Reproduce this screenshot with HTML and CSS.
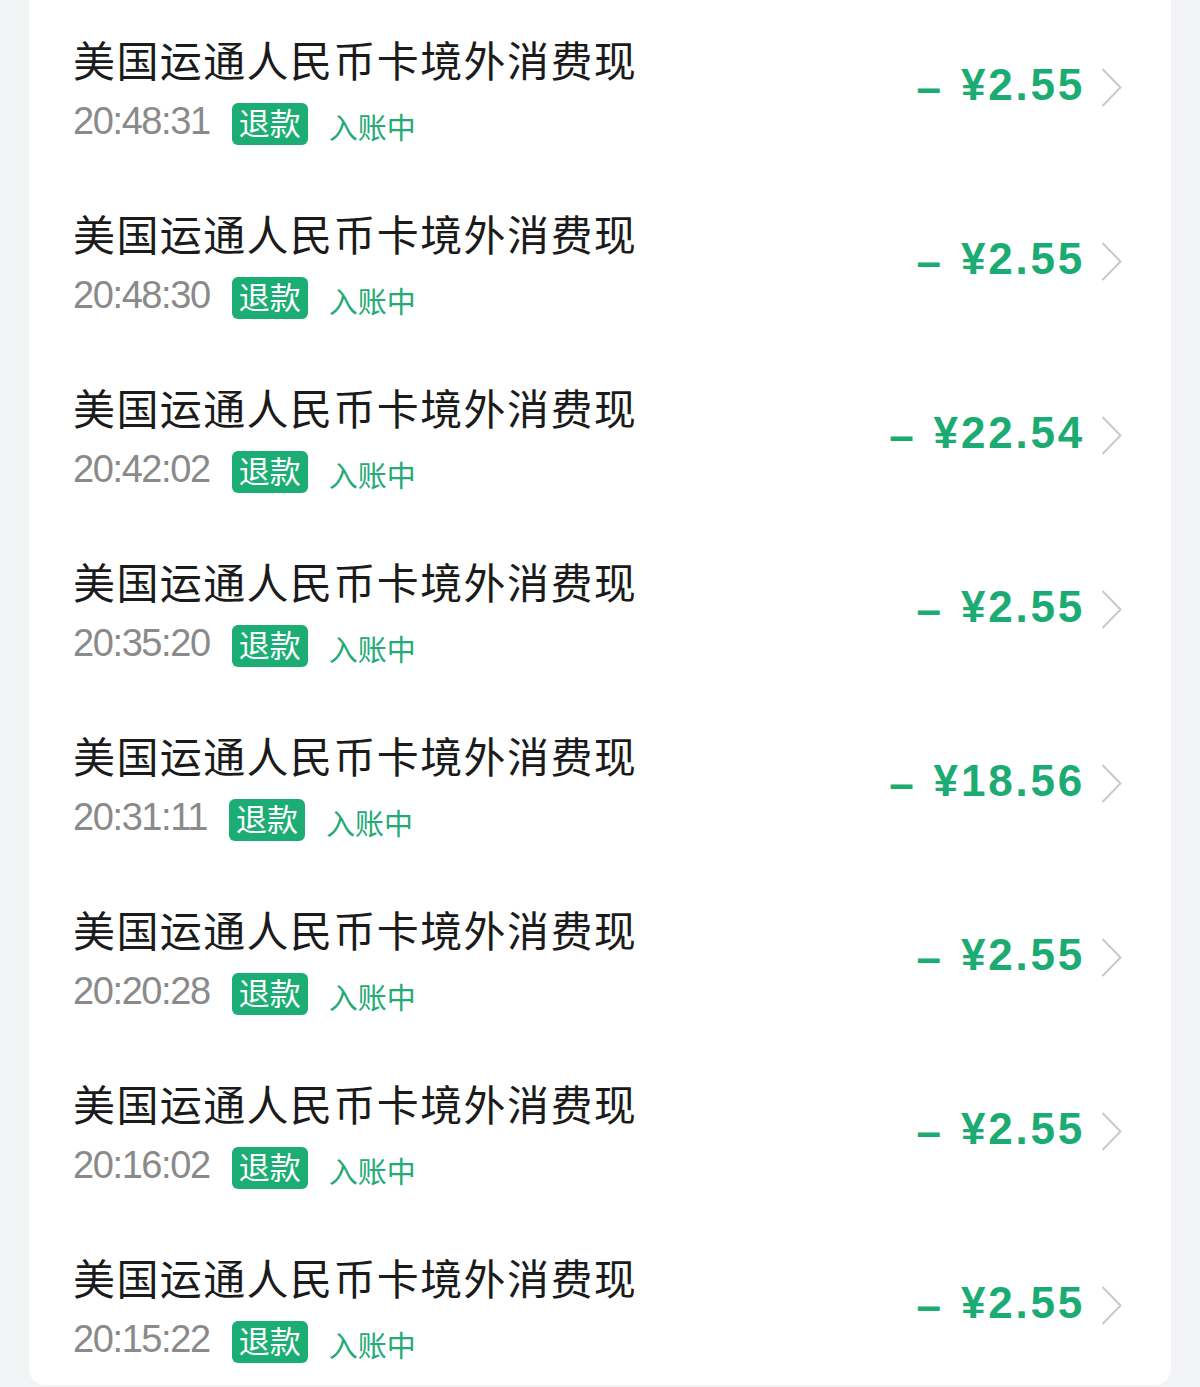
FILE: index.html
```html
<!DOCTYPE html>
<html lang="zh-CN">
<head>
<meta charset="utf-8">
<title>交易记录</title>
<link rel="stylesheet" href="styles.css">
</head>
<body>
<div class="page">
  <ul class="card">
    <li class="row">
      <div class="info">
        <div class="title">美国运通人民币卡境外消费现</div>
        <div class="meta"><span class="time">20:48:31</span><span class="badge">退款</span><span class="status">入账中</span></div>
      </div>
      <div class="side"><span class="amount"><span class="dash">–</span> ¥2.55</span><svg class="chev" viewBox="0 0 21 39" width="21" height="39"><polyline points="1.5,1 19.5,19.5 1.5,38" /></svg></div>
    </li>
    <li class="row">
      <div class="info">
        <div class="title">美国运通人民币卡境外消费现</div>
        <div class="meta"><span class="time">20:48:30</span><span class="badge">退款</span><span class="status">入账中</span></div>
      </div>
      <div class="side"><span class="amount"><span class="dash">–</span> ¥2.55</span><svg class="chev" viewBox="0 0 21 39" width="21" height="39"><polyline points="1.5,1 19.5,19.5 1.5,38" /></svg></div>
    </li>
    <li class="row">
      <div class="info">
        <div class="title">美国运通人民币卡境外消费现</div>
        <div class="meta"><span class="time">20:42:02</span><span class="badge">退款</span><span class="status">入账中</span></div>
      </div>
      <div class="side"><span class="amount"><span class="dash">–</span> ¥22.54</span><svg class="chev" viewBox="0 0 21 39" width="21" height="39"><polyline points="1.5,1 19.5,19.5 1.5,38" /></svg></div>
    </li>
    <li class="row">
      <div class="info">
        <div class="title">美国运通人民币卡境外消费现</div>
        <div class="meta"><span class="time">20:35:20</span><span class="badge">退款</span><span class="status">入账中</span></div>
      </div>
      <div class="side"><span class="amount"><span class="dash">–</span> ¥2.55</span><svg class="chev" viewBox="0 0 21 39" width="21" height="39"><polyline points="1.5,1 19.5,19.5 1.5,38" /></svg></div>
    </li>
    <li class="row">
      <div class="info">
        <div class="title">美国运通人民币卡境外消费现</div>
        <div class="meta"><span class="time">20:31:11</span><span class="badge">退款</span><span class="status">入账中</span></div>
      </div>
      <div class="side"><span class="amount"><span class="dash">–</span> ¥18.56</span><svg class="chev" viewBox="0 0 21 39" width="21" height="39"><polyline points="1.5,1 19.5,19.5 1.5,38" /></svg></div>
    </li>
    <li class="row">
      <div class="info">
        <div class="title">美国运通人民币卡境外消费现</div>
        <div class="meta"><span class="time">20:20:28</span><span class="badge">退款</span><span class="status">入账中</span></div>
      </div>
      <div class="side"><span class="amount"><span class="dash">–</span> ¥2.55</span><svg class="chev" viewBox="0 0 21 39" width="21" height="39"><polyline points="1.5,1 19.5,19.5 1.5,38" /></svg></div>
    </li>
    <li class="row">
      <div class="info">
        <div class="title">美国运通人民币卡境外消费现</div>
        <div class="meta"><span class="time">20:16:02</span><span class="badge">退款</span><span class="status">入账中</span></div>
      </div>
      <div class="side"><span class="amount"><span class="dash">–</span> ¥2.55</span><svg class="chev" viewBox="0 0 21 39" width="21" height="39"><polyline points="1.5,1 19.5,19.5 1.5,38" /></svg></div>
    </li>
    <li class="row">
      <div class="info">
        <div class="title">美国运通人民币卡境外消费现</div>
        <div class="meta"><span class="time">20:15:22</span><span class="badge">退款</span><span class="status">入账中</span></div>
      </div>
      <div class="side"><span class="amount"><span class="dash">–</span> ¥2.55</span><svg class="chev" viewBox="0 0 21 39" width="21" height="39"><polyline points="1.5,1 19.5,19.5 1.5,38" /></svg></div>
    </li>
  </ul>
</div>
</body>
</html>
```

FILE: styles.css
```css
html, body {
  margin: 0;
  padding: 0;
  background: #f2f3f5;
}

.page {
  padding: 0 29px;
}

.card {
  list-style: none;
  margin: 0;
  background: #ffffff;
  border-radius: 0 0 16px 16px;
  padding: 35px 49px 22px 44px;
  display: flex;
  flex-direction: column;
  gap: 64px;
}

.row {
  display: flex;
  justify-content: space-between;
  align-items: center;
}

.info {
  display: flex;
  flex-direction: column;
  gap: 20px;
}

.title {
  font-family: "Noto Sans CJK SC", sans-serif;
  font-size: 42px;
  line-height: 48px;
  letter-spacing: 1.4px;
  color: #1b1b1b;
  height: 48px;
  white-space: nowrap;
}

.meta {
  display: flex;
  align-items: center;
  height: 42px;
}

.time {
  font-family: "Liberation Sans", Arial, sans-serif;
  font-size: 38px;
  line-height: 38px;
  letter-spacing: -1.4px;
  color: #8a8a8a;
  margin-bottom: 7px;
  margin-right: 22px;
}

.badge {
  font-family: "Noto Sans CJK SC", sans-serif;
  font-size: 31px;
  line-height: 38px;
  height: 42px;
  box-sizing: border-box;
  padding: 0 7px 4px;
  border-radius: 6px;
  background: #1cad74;
  color: #ffffff;
  margin-right: 21px;
}

.status {
  font-family: "Noto Sans CJK SC", sans-serif;
  font-size: 29px;
  line-height: 34px;
  color: #24aa76;
  margin-top: 4px;
}

.side {
  display: flex;
  align-items: center;
  gap: 16px;
  margin-bottom: 6px;
}

.amount {
  font-family: "Liberation Sans", Arial, sans-serif;
  font-weight: bold;
  font-size: 44px;
  line-height: 44px;
  letter-spacing: 2.8px;
  color: #1cab72;
  margin-bottom: 4px;
  white-space: nowrap;
}

.dash {
  position: relative;
  top: 3px;
  margin-right: 2px;
}

.chev {
  display: block;
}

.chev polyline {
  fill: none;
  stroke: #c9c9c9;
  stroke-width: 2;
}
```
